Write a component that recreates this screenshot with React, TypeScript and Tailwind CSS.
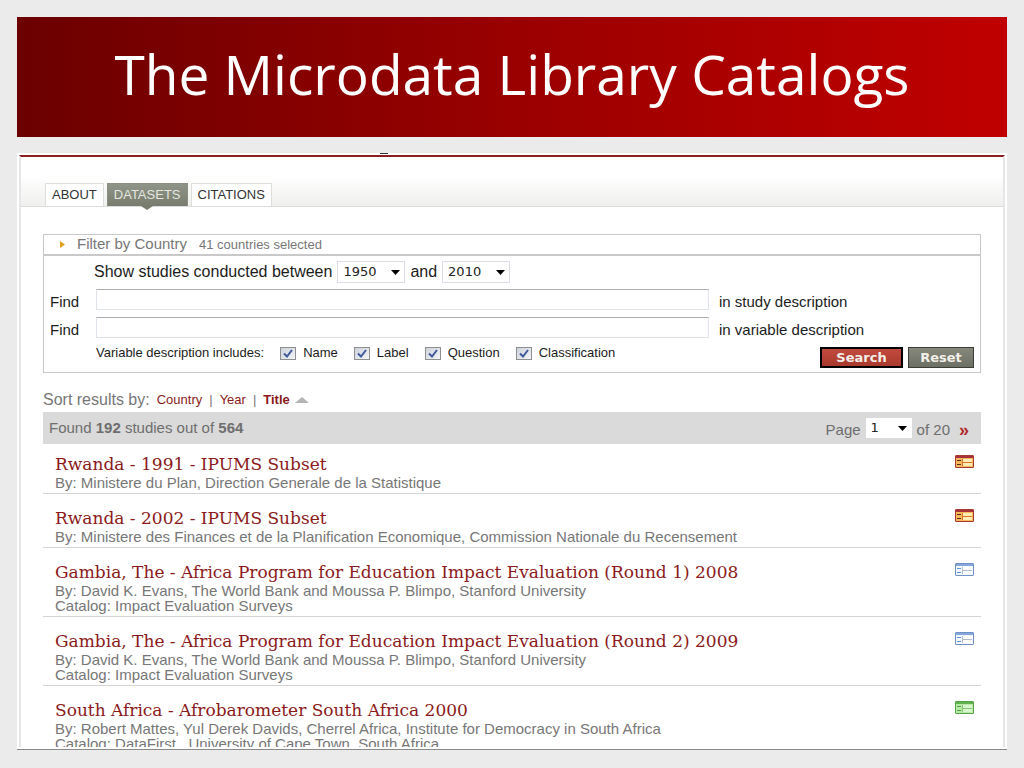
import { useState } from "react";

type Tone = "red" | "blue" | "green";

interface Study {
  title: string;
  by: string;
  catalog?: string;
  tone: Tone;
}

const STUDIES: Study[] = [
  {
    title: "Rwanda - 1991 - IPUMS Subset",
    by: "Ministere du Plan, Direction Generale de la Statistique",
    tone: "red",
  },
  {
    title: "Rwanda - 2002 - IPUMS Subset",
    by: "Ministere des Finances et de la Planification Economique, Commission Nationale du Recensement",
    tone: "red",
  },
  {
    title: "Gambia, The - Africa Program for Education Impact Evaluation (Round 1) 2008",
    by: "David K. Evans, The World Bank and Moussa P. Blimpo, Stanford University",
    catalog: "Impact Evaluation Surveys",
    tone: "blue",
  },
  {
    title: "Gambia, The - Africa Program for Education Impact Evaluation (Round 2) 2009",
    by: "David K. Evans, The World Bank and Moussa P. Blimpo, Stanford University",
    catalog: "Impact Evaluation Surveys",
    tone: "blue",
  },
  {
    title: "South Africa - Afrobarometer South Africa 2000",
    by: "Robert Mattes, Yul Derek Davids, Cherrel Africa, Institute for Democracy in South Africa",
    catalog: "DataFirst , University of Cape Town, South Africa",
    tone: "green",
  },
];

const TONES = {
  red: { frame: "#a8382f", bar: "#a8323a", fill: "#f8b85c", cell: "#fdecb4", mark: "#5c2a12", line: "#d9742a" },
  blue: { frame: "#7090c8", bar: "#86a6de", fill: "#f4f7fd", cell: "#ffffff", mark: "#5f93dc", line: "#b4bccb" },
  green: { frame: "#55a445", bar: "#5fb34e", fill: "#b9e8a8", cell: "#d9f5cd", mark: "#4fa63e", line: "#84c775" },
};

function FormIcon({ tone }: { tone: Tone }) {
  const c = TONES[tone];
  return (
    <svg width="19" height="13" viewBox="0 0 19 13" className="shrink-0" aria-hidden="true">
      <rect x="0.5" y="0.5" width="18" height="12" rx="0.5" fill={c.fill} stroke={c.frame} />
      <rect x="1" y="1" width="17" height="2" fill={c.bar} />
      <rect x="8" y="4" width="9" height="3" fill={c.cell} />
      <rect x="8" y="8" width="9" height="3" fill={c.cell} />
      <path d="M2 5.500h4M2 9.500h4" stroke={c.mark} />
      <path d="M7.500 4v7M8 7.500h9" stroke={c.line} />
    </svg>
  );
}

interface PickerProps {
  id: string;
  value: string;
  options: string[];
  className: string;
}

function Picker({ id, value, options, className }: PickerProps) {
  return (
    <span className="inline-grid items-center">
      <select
        id={id}
        defaultValue={value}
        className={`col-start-1 row-start-1 appearance-none bg-white font-['DejaVu_Sans',sans-serif] text-[13px] leading-5 text-[#222] ${className}`}
      >
        {options.map((o) => (
          <option key={o}>{o}</option>
        ))}
      </select>
      <svg
        width="9"
        height="5"
        viewBox="0 0 9 5"
        className="pointer-events-none col-start-1 row-start-1 mr-[5px] justify-self-end"
        aria-hidden="true"
      >
        <path d="M0 0h9L4.500 5z" fill="#000" />
      </svg>
    </span>
  );
}

function Check({ label }: { label: string }) {
  const [on, setOn] = useState(true);
  return (
    <label className="flex items-center gap-[7px]">
      <span className="grid place-items-center">
        <input
          type="checkbox"
          checked={on}
          onChange={() => setOn(!on)}
          className="col-start-1 row-start-1 h-[13px] w-4 appearance-none border border-[#8e8f8f] bg-gradient-to-br from-[#cdd2da] to-[#f4f5f8]"
        />
        {on && (
          <svg
            width="10"
            height="9"
            viewBox="0 0 10 9"
            className="pointer-events-none col-start-1 row-start-1"
            aria-hidden="true"
          >
            <path d="M1 4.500L4 7.500L9 1" fill="none" stroke="#3f5a9a" strokeWidth="2" />
          </svg>
        )}
      </span>
      {label}
    </label>
  );
}

function FindRow({ id, suffix }: { id: string; suffix: string }) {
  return (
    <div className="flex items-start">
      <label htmlFor={id} className="w-[46px] pt-1 leading-[18px]">
        Find
      </label>
      <input
        id={id}
        type="text"
        className="h-[21px] min-w-0 flex-1 border border-[#dfe3ea] border-t-[#abadb3] bg-white px-1"
      />
      <span className="w-[265px] pt-1 pl-[10px] leading-[18px]">{suffix}</span>
    </div>
  );
}

function Tabs() {
  return (
    <nav className="flex items-end gap-[3px] border-b border-[#dcdcda] bg-gradient-to-b from-white from-40% to-[#efefed] px-6 pt-[26px] text-[13px] leading-[22px] text-[#333]">
      <a href="#about" className="border border-b-0 border-[#deded9] bg-white px-[6px]">
        ABOUT
      </a>
      <a
        href="#datasets"
        className="relative border border-b-0 border-[#8b8f81] bg-gradient-to-b from-[#8f9488] to-[#777c6e] px-[6px] text-[#e4e6df]"
      >
        DATASETS
        <svg
          width="12"
          height="4"
          viewBox="0 0 12 4"
          className="absolute top-full left-1/2 -translate-x-1/2"
          aria-hidden="true"
        >
          <path d="M0 0h12L6 4z" fill="#777c6e" />
        </svg>
      </a>
      <a href="#citations" className="border border-b-0 border-[#deded9] bg-white px-[6px]">
        CITATIONS
      </a>
    </nav>
  );
}

function FilterForm() {
  return (
    <form
      className="border border-[#c9c9c9] text-[15px] text-[#1c1c1c]"
      onSubmit={(e) => e.preventDefault()}
    >
      <div className="flex h-[21px] items-center border-b-2 border-[#c9c9c9] pl-4 text-[#777]">
        <svg width="5" height="7" viewBox="0 0 5 7" aria-hidden="true">
          <path d="M0 0L5 3.500L0 7z" fill="#e0a020" />
        </svg>
        <span className="pl-3">Filter by Country</span>
        <span className="pl-3 text-[13px]">41 countries selected</span>
      </div>

      <div className="px-[6px] pt-[5px] pb-1">
        <div className="flex h-[22px] items-center gap-[5px] pl-11 text-[16px]">
          <label htmlFor="from-year">Show studies conducted between</label>
          <Picker
            id="from-year"
            value="1950"
            options={["1950", "1960", "1970", "1980", "1990", "2000", "2010"]}
            className="w-[68px] border border-[#d9dde6] pl-[5px]"
          />
          <label htmlFor="to-year">and</label>
          <Picker
            id="to-year"
            value="2010"
            options={["1950", "1960", "1970", "1980", "1990", "2000", "2010"]}
            className="w-[68px] border border-[#d9dde6] pl-[5px]"
          />
        </div>

        <div className="flex flex-col gap-[6px] pt-[6px]">
          <FindRow id="find-study" suffix="in study description" />
          <FindRow id="find-variable" suffix="in variable description" />
        </div>

        <div className="flex items-start justify-between pt-[6px] pl-[46px]">
          <div className="flex items-center gap-4 text-[13px] leading-4">
            <span>Variable description includes:</span>
            <Check label="Name" />
            <Check label="Label" />
            <Check label="Question" />
            <Check label="Classification" />
          </div>
          <div className="flex gap-[5px] pt-[2px] font-['DejaVu_Sans',sans-serif] text-[13px] font-bold text-[#f3efe9]">
            <button
              type="submit"
              className="h-[21px] w-[83px] border-2 border-black bg-gradient-to-b from-[#c24a3d] to-[#a93a2e] leading-4"
            >
              Search
            </button>
            <button
              type="reset"
              className="h-[21px] w-[66px] border border-[#3b3d36] bg-gradient-to-b from-[#85887b] to-[#6c6f63] leading-4"
            >
              Reset
            </button>
          </div>
        </div>
      </div>
    </form>
  );
}

function StudyRow({ study }: { study: Study }) {
  return (
    <li className="flex items-start justify-between border-b border-[#d4d4d4] pt-[14px] pr-[7px] pb-[3px] pl-3 first:pt-[10px]">
      <div>
        <h2 className="font-['DejaVu_Serif',serif] text-[17px] leading-[21px] text-[#8b1a1a]">
          <a href="#study">{study.title}</a>
        </h2>
        <p>By: {study.by}</p>
        {study.catalog && <p>Catalog: {study.catalog}</p>}
      </div>
      <div className="pt-px">
        <FormIcon tone={study.tone} />
      </div>
    </li>
  );
}

export default function App() {
  return (
    <div className="flex h-screen flex-col bg-[#ebebeb] px-[17px] pt-[17px] pb-[18px] font-['Liberation_Sans',Arial,sans-serif]">
      <header className="flex h-[120px] shrink-0 items-center justify-center bg-gradient-to-r from-[#6b0000] via-[#9a0000] to-[#c00000] pb-2">
        <h1 className="font-['Open_Sans',sans-serif] text-[55px] leading-none whitespace-nowrap text-white">
          The Microdata Library Catalogs
        </h1>
      </header>

      <main className="relative mt-4 flex min-h-0 flex-1 flex-col border-b border-[#8a8a8a] bg-white px-[2px] py-[2px]">
        <span className="absolute top-0 left-[363px] h-px w-2 bg-[#333]" />
        <div className="min-h-0 flex-1 overflow-hidden border-x-2 border-t-2 border-x-[#e6e6e6] border-t-[#8b1e22]">
          <Tabs />
          <div className="px-[22px] pt-[27px]">
            <FilterForm />

            <div className="flex items-center gap-[7px] pt-[18px] text-[13px] leading-[18px] text-[#8b1a1a]">
              <span className="text-[16px] text-[#777]">Sort results by:</span>
              <a href="#country">Country</a>
              <span className="text-[#777]">|</span>
              <a href="#year">Year</a>
              <span className="text-[#777]">|</span>
              <a href="#title" className="flex items-center gap-[5px] font-bold">
                Title
                <svg width="14" height="6" viewBox="0 0 14 6" aria-hidden="true">
                  <path d="M0 6L7 0L14 6z" fill="#b5b5b5" />
                </svg>
              </a>
            </div>

            <div className="mt-[3px] flex h-8 items-center justify-between bg-[#dadada] pr-3 pl-[6px] text-[15px] text-[#6e6e6e]">
              <p>
                Found <b>192</b> studies out of <b>564</b>
              </p>
              <div className="flex items-center gap-[5px]">
                <label htmlFor="page" className="pt-1">
                  Page
                </label>
                <Picker
                  id="page"
                  value="1"
                  options={["1", "2", "3", "4", "5"]}
                  className="w-[46px] pl-[5px]"
                />
                <span className="pt-1">of 20</span>
                <a href="#next" aria-label="Next page" className="pt-1 pl-1 text-[18px] leading-5 font-bold text-[#b02a2a]">
                  »
                </a>
              </div>
            </div>

            <ul className="text-[15px] leading-[15px] text-[#777]">
              {STUDIES.map((s) => (
                <StudyRow key={s.title} study={s} />
              ))}
            </ul>
          </div>
        </div>
      </main>
    </div>
  );
}
